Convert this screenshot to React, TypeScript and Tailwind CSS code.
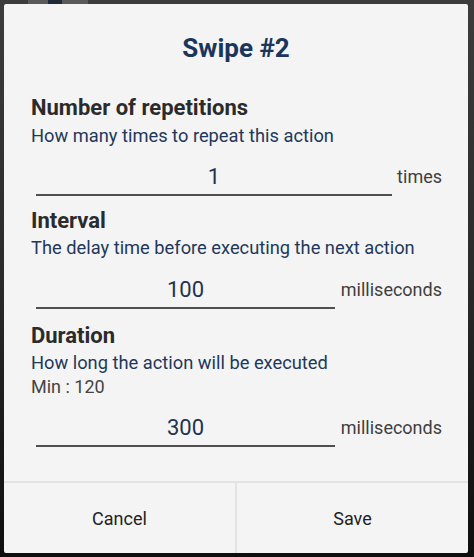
import React from "react";

function Field({ value, unit, short }: { value: string; unit: string; short?: boolean }) {
  return (
    <div className="flex items-end pl-[32px] pr-[26px]">
      <div className={`${short ? "w-[299px]" : "w-[356px]"} h-[33px] border-b-2 border-[#4f4f4f] flex items-start justify-center`}>
        <span className="text-[22px] leading-[28px] text-[#1f3350]">{value}</span>
      </div>
      <div className="flex-1 flex justify-end h-[33px]">
        <span className="text-[18px] leading-[28px] text-[#3e3e3e]">{unit}</span>
      </div>
    </div>
  );
}

export default function App() {
  return (
    <div
      className="relative w-[474px] h-[557px] overflow-hidden bg-gradient-to-b from-[#3c3c3c] via-[#2a2a2a] to-[#0e0e0e] pt-[4px] px-[4px]"
      style={{ fontFamily: "Roboto, 'Noto Sans', sans-serif" }}
    >
      <div className="absolute left-[28px] top-0 w-[60px] h-[4px] bg-[#5a5a5a]">
        <div className="absolute left-[20px] top-0 w-[14px] h-[4px] bg-[#1e2a36]" />
      </div>
      <div className="w-[464px] h-[549px] bg-[#f4f4f4] rounded-[2px] flex flex-col">
        <div className="pt-[29px] text-center text-[26px] leading-[30px] font-bold text-[#1b365d]">
          Swipe #2
        </div>

        <div className="pl-[27px] pt-[31.5px]">
          <div className="text-[22px] leading-[26px] font-bold text-[#2b2b2b]">Number of repetitions</div>
          <div className="mt-[3.5px] text-[18.3px] leading-[24px] text-[#22385a]">How many times to repeat this action</div>
        </div>
        <div className="mt-[15px]">
          <Field value="1" unit="times" />
        </div>

        <div className="pl-[27px] pt-[12px]">
          <div className="text-[22px] leading-[26px] font-bold text-[#2b2b2b]">Interval</div>
          <div className="mt-[2px] text-[18.3px] leading-[24px] text-[#22385a]">The delay time before executing the next action</div>
        </div>
        <div className="mt-[16px]">
          <Field value="100" unit="milliseconds" short />
        </div>

        <div className="pl-[27px] pt-[13.5px]">
          <div className="text-[22px] leading-[26px] font-bold text-[#2b2b2b]">Duration</div>
          <div className="mt-[2px] text-[18.3px] leading-[24px] text-[#22385a]">How long the action will be executed</div>
          <div className="mt-[1px] text-[18px] leading-[22px] text-[#444444]">Min : 120</div>
        </div>
        <div className="mt-[16.5px]">
          <Field value="300" unit="milliseconds" short />
        </div>

        <div className="mt-auto h-[72px] border-t-2 border-[#e3e3e3] flex">
          <div className="flex-1 flex items-center justify-center text-[18px] text-[#222222] border-r-2 border-[#e3e3e3]">
            Cancel
          </div>
          <div className="flex-1 flex items-center justify-center text-[18px] text-[#222222]">Save</div>
        </div>
      </div>
    </div>
  );
}
